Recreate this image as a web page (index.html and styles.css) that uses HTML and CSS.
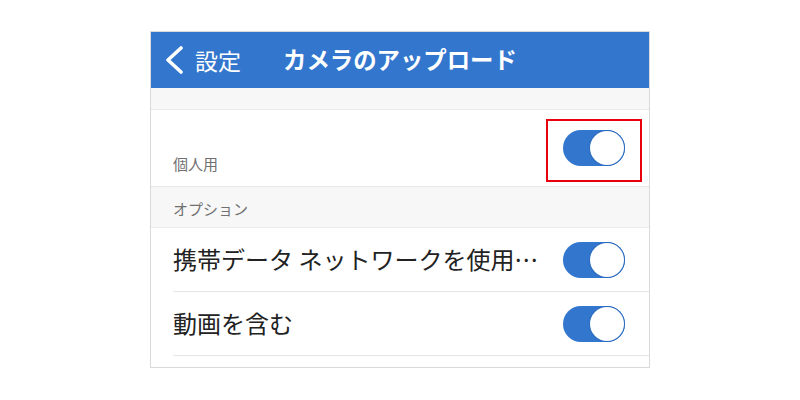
FILE: index.html
```html
<!DOCTYPE html>
<html lang="ja">
<head>
<meta charset="utf-8">
<link rel="stylesheet" href="styles.css">
</head>
<body>
<div class="frame">
  <div class="header">
    <div class="back">
      <svg class="chev" width="18" height="28" viewBox="0 0 18 28"><path d="M16 2 L3 14 L16 26" fill="none" stroke="#fff" stroke-width="3.6" stroke-linecap="round" stroke-linejoin="round"/></svg>
      <span class="back-label">設定</span>
    </div>
    <div class="title">カメラのアップロード</div>
  </div>
  <div class="spacer"></div>
  <div class="row-personal">
    <span class="sub-label">個人用</span>
    <span class="toggle"><span class="knob"></span></span>
  </div>
  <div class="section">オプション</div>
  <div class="row">
    <div class="row-inner">
      <span class="label">携帯データ ネットワークを使用…</span>
      <span class="toggle"><span class="knob"></span></span>
    </div>
  </div>
  <div class="row">
    <div class="row-inner">
      <span class="label">動画を含む</span>
      <span class="toggle"><span class="knob"></span></span>
    </div>
  </div>
  <div class="tail"></div>
  <div class="highlight"></div>
</div>
</body>
</html>
```
FILE: styles.css
```css
* { box-sizing: border-box; }
html, body { margin: 0; padding: 0; background: #fff; }
body {
  font-family: "Noto Sans CJK JP", "Noto Sans", sans-serif;
  width: 800px; height: 400px; overflow: hidden;
}
.frame {
  position: relative;
  margin: 31px 0 0 150px;
  width: 500px;
  border: 1px solid #d9d9d9;
}
.header {
  height: 56px;
  background: #3376cd;
  display: flex;
  align-items: center;
  color: #fff;
}
.back {
  display: flex;
  align-items: center;
  padding-left: 14px;
  gap: 12px;
}
.chev { display: block; }
.back-label { font-size: 23px; line-height: 1; }
.title {
  margin-left: 42px;
  font-size: 23.4px;
  font-weight: 700;
  line-height: 1;
}
.spacer {
  height: 22px;
  background: #f7f7f7;
  border-bottom: 1px solid #ececec;
}
.row-personal {
  height: 77px;
  display: flex;
  justify-content: space-between;
  align-items: center;
  padding: 0 24px 0 22px;
  border-bottom: 1px solid #e8e8e8;
}
.sub-label {
  align-self: flex-end;
  margin-bottom: 11px;
  font-size: 15px;
  line-height: 22px;
  color: #707070;
}
.section {
  height: 41px;
  background: #f7f7f7;
  border-bottom: 1px solid #ebebeb;
  padding: 2px 0 0 22px;
  display: flex;
  align-items: center;
  font-size: 15px;
  color: #707070;
}
.row-inner {
  height: 64px;
  margin-left: 22px;
  padding-right: 24px;
  border-bottom: 1px solid #e6e6e6;
  display: flex;
  justify-content: space-between;
  align-items: center;
}
.label {
  font-size: 24px;
  line-height: 1.2;
  color: #222;
  white-space: nowrap;
}
.toggle {
  position: relative;
  display: block;
  width: 62px;
  height: 36px;
  border-radius: 18px;
  background: #3376cd;
  flex: none;
}
.knob {
  position: absolute;
  top: 1px;
  right: 1px;
  width: 34px;
  height: 34px;
  border-radius: 50%;
  background: #fff;
  box-shadow: 0 0 0 1px #2d6cc0;
}
.tail { height: 11px; }
.highlight {
  position: absolute;
  left: 395px;
  top: 87px;
  width: 96px;
  height: 63px;
  border: 2px solid #e8000f;
}
```
